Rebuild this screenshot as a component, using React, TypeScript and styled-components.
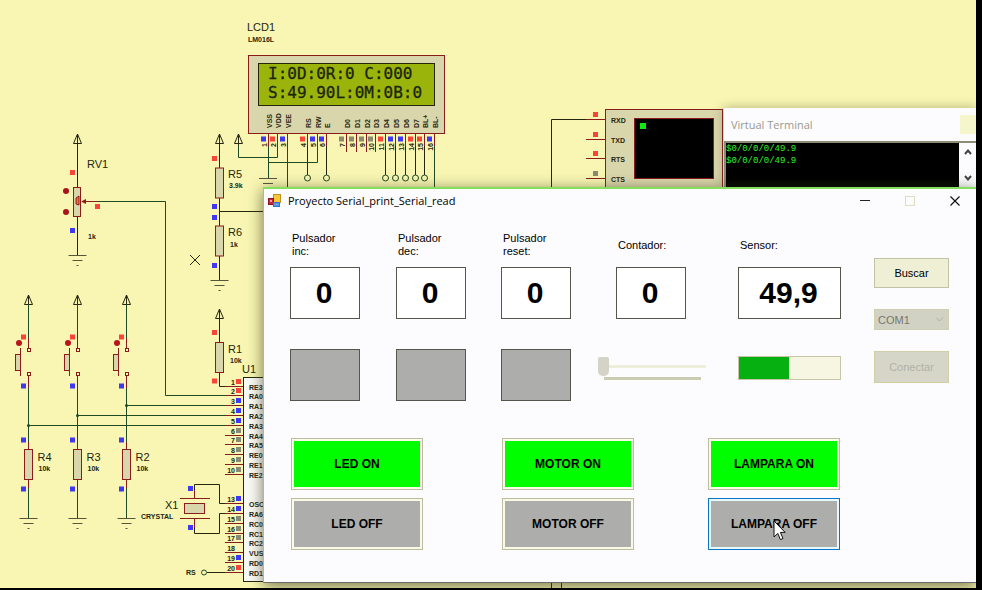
import React, { useState } from "react";
import styled, { createGlobalStyle, css } from "styled-components";

const GlobalStyle = createGlobalStyle`
  * { box-sizing: border-box; }
  body {
    margin: 0;
    background: #000;
    font-family: "Liberation Sans", Arial, sans-serif;
    font-size: 11px;
    color: #000;
  }
  button, input, select { font: inherit; color: inherit; margin: 0; }
`;

/* ---------- desktop ---------- */

const Desktop = styled.main`
  position: relative;
  min-height: 100vh;
  overflow: hidden;
  background: #f8f6b2;
  border-right: 6px solid #000;
  border-bottom: 2px solid #000;
`;

const Sheet = styled.svg`
  display: block;
  font-family: "Liberation Sans", Arial, sans-serif;
`;

const Frame = styled.section`
  position: absolute;
  right: 0;
  display: flex;
  flex-direction: column;
  background: #fcfcfe;
`;

const TerminalFrame = styled(Frame)`
  top: 108px;
  left: 724px;
  box-shadow: 0 0 10px rgba(70, 70, 40, 0.4);
`;

const FormFrame = styled(Frame)`
  top: 187px;
  left: 263px;
  border-top: 2px solid #84e05c;
  border-left: 1px solid #84d860;
  border-bottom: 1px solid #6a6a70;
  box-shadow: 0 3px 14px rgba(60, 60, 30, 0.7);
`;

/* ---------- terminal ---------- */

const TerminalTitle = styled.header`
  display: flex;
  align-items: center;
  justify-content: space-between;
  height: 33px;
  padding-left: 7px;
  font-family: "Open Sans", "Noto Sans", sans-serif;
  font-size: 11px;
  color: #99998c;
`;

const TitleGhost = styled.span`
  width: 16px;
  height: 19px;
  background: #f6f6cc;
`;

const TerminalBody = styled.div`
  display: flex;
  border-top: 2px solid #8c8c74;
  border-left: 2px solid #8c8c74;
`;

const TerminalText = styled.pre`
  flex: 1;
  height: 44px;
  margin: 0;
  background: #000;
  color: #2cf42c;
  font: 9px/12px "Liberation Mono", monospace;
`;

const ScrollBar = styled.div`
  display: flex;
  flex-direction: column;
  justify-content: space-between;
  width: 17px;
`;

const ScrollButton = styled.button`
  display: grid;
  place-items: center;
  height: 18px;
  padding: 0;
  border: 0;
  background: #fcfcfe;
`;

/* ---------- form ---------- */

const TitleBar = styled.header`
  display: flex;
  align-items: center;
  height: 24px;
  padding: 0 10px 0 4px;
  gap: 6px;
`;

const Title = styled.h1`
  flex: 1;
  margin: 0;
  font: 400 11px/24px "Open Sans", "Noto Sans", sans-serif;
  white-space: nowrap;
`;

const Controls = styled.div`
  display: flex;
  gap: 23px;
`;

const ControlButton = styled.button`
  display: grid;
  place-items: center;
  width: 22px;
  height: 22px;
  padding: 0;
  border: 0;
  background: none;
`;

const FormBody = styled.form`
  display: flex;
  gap: 33px;
  padding: 19px 27px 32px 26px;
`;

const Panel = styled.div`
  flex: 1;
  min-width: 0;
  display: flex;
  flex-direction: column;
`;

const Row = styled.div<{ $top?: number }>`
  display: grid;
  grid-template-columns: 106fr 105fr 115fr 122fr 103fr;
  margin-top: ${(p) => p.$top ?? 0}px;
`;

const Field = styled.div<{ $wide?: boolean }>`
  width: ${(p) => (p.$wide ? "103px" : "70px")};
`;

const FieldLabel = styled.label`
  display: flex;
  align-items: center;
  height: 26px;
  margin-bottom: 9px;
  padding: 0 2px;
  line-height: 13px;
`;

const Reading = styled.input`
  display: block;
  width: 100%;
  height: 52px;
  padding: 0 2px 0 0;
  border: 1px solid #55554c;
  background: #fff;
  text-align: center;
  && {
    font-size: 30px;
    font-weight: 700;
  }
`;

const Lamp = styled.div`
  width: 70px;
  height: 52px;
  border: 1px solid #55554c;
  background: #adaeac;
`;

const SliderBox = styled.div`
  width: 108px;
  margin-left: -18px;
  padding-top: 7px;
`;

const Slider = styled.input`
  appearance: none;
  display: block;
  width: 108px;
  height: 20px;
  background: none;
  &::-webkit-slider-runnable-track {
    height: 3px;
    background: #eeeeda;
  }
  &::-webkit-slider-thumb {
    appearance: none;
    width: 11px;
    height: 19px;
    margin-top: -8px;
    border-radius: 2px 2px 5px 5px;
    background: #d3d3c8;
  }
`;

const SliderTicks = styled.div`
  height: 3px;
  margin: 1px 5px 0 6px;
  background: #ccccb2;
`;

const Meter = styled.progress`
  appearance: none;
  display: block;
  width: 103px;
  height: 24px;
  margin-top: 7px;
  border: 1px solid #c6c6a6;
  &::-webkit-progress-bar {
    background: #f6f6e2;
  }
  &::-webkit-progress-value {
    background: #06b010;
  }
`;

const CommandGrid = styled.div`
  display: grid;
  grid-template-columns: 211fr 206fr 133fr;
  row-gap: 8px;
  margin-top: 37px;
  padding-left: 1px;
`;

const CommandCell = styled.div`
  position: relative;
  width: 132px;
`;

const Command = styled.button<{ $on?: boolean; $focused?: boolean }>`
  display: block;
  width: 100%;
  height: 52px;
  padding: 0;
  border: 1px solid #bcbca0;
  box-shadow: inset 0 0 0 2px #fafae6;
  background: ${(p) => (p.$on ? "#00fd00" : "#adaeac")};
  && {
    font-size: 12px;
    font-weight: 700;
  }
  ${(p) =>
    p.$focused &&
    css`
      border-color: #0a74c4;
      box-shadow: inset 0 0 0 2px #e8f8fc;
    `}
`;

const Pointer = styled.svg`
  position: absolute;
  left: 65px;
  top: 22px;
  pointer-events: none;
`;

const Side = styled.div`
  display: flex;
  flex-direction: column;
  width: 75px;
  padding-top: 26px;
`;

const SideButton = styled.button<{ $muted?: boolean }>`
  height: ${(p) => (p.$muted ? 32 : 30)}px;
  padding: 0;
  border: 1px solid ${(p) => (p.$muted ? "#cfcfa8" : "#c2c2a4")};
  background: ${(p) => (p.$muted ? "#d6d6c8" : "#efefd6")};
  &:disabled {
    color: #b2b2a2;
  }
`;

const PortBox = styled.div`
  position: relative;
  margin: 21px 0;
`;

const PortSelect = styled.select`
  appearance: none;
  display: block;
  width: 100%;
  height: 21px;
  padding: 0 3px;
  border: 1px solid #d0d0b0;
  border-radius: 0;
  background: #d2d2c4;
  opacity: 1;
  && {
    font-size: 11px;
    color: #77776c;
  }
`;

const PortArrow = styled.svg`
  position: absolute;
  right: 5px;
  top: 7px;
  pointer-events: none;
`;

/* ---------- schematic parts ---------- */

const WIRE = "#1f4a22";
const DARK = "#26260f";
const MAROON = "#8a1c1c";
const BODY = "#d9d6ab";
const RED = "#fa4438";
const BLUE = "#4038f4";
const GREY = "#8a8a70";

type XY = { x: number; y: number };

const Dot = ({ x, y, c }: XY & { c: string }) => (
  <rect x={x - 2.5} y={y - 2.5} width="5" height="5" fill={c} />
);

const Name = ({ x, y, children }: XY & { children: string }) => (
  <text x={x} y={y} fontSize="11" fill={DARK}>{children}</text>
);

const Tiny = ({ x, y, children, end }: XY & { children: string; end?: boolean }) => (
  <text x={x} y={y} fontSize="7" fontWeight="700" fill={DARK} textAnchor={end ? "end" : "start"}>
    {children}
  </text>
);

const Wire = ({ d, c = WIRE }: { d: string; c?: string }) => (
  <path d={d} fill="none" stroke={c} />
);

const Supply = ({ x, y }: XY) => (
  <path
    d={`M${x} ${y + 1}L${x - 4} ${y + 10.5}H${x + 4}ZV${y + 12}`}
    fill="none"
    stroke={DARK}
    strokeLinejoin="bevel"
  />
);

const Ground = ({ x, y }: XY) => (
  <path
    d={`M${x - 9} ${y}H${x + 9}M${x - 5} ${y + 5}H${x + 5}M${x - 1} ${y + 10}H${x + 1}`}
    stroke="#55553c"
    fill="none"
  />
);

const Resistor = ({ x, y }: XY) => (
  <rect x={x - 4} y={y} width="8" height="30" fill={BODY} stroke={MAROON} />
);

const Push = ({ x, name, bus }: { x: number; name: string; bus: number }) => (
  <g>
    <Supply x={x} y={294} />
    <Wire d={`M${x} 304V338M${x} 388V442M${x} 488V518`} />
    <Wire d={`M${x} 338V348M${x} 376V388M${x} 442V450M${x} 480V488M${x - 8} 348V376`} c={MAROON} />
    <rect x={x - 13} y={354.5} width="5" height="16" fill={BODY} stroke={MAROON} />
    <rect x={x - 1} y={348.5} width="3" height="3" fill="#f8f6b2" stroke={MAROON} />
    <rect x={x - 1} y={372.5} width="3" height="3" fill="#f8f6b2" stroke={MAROON} />
    <Dot x={x - 5} y={337} c={RED} />
    <circle cx={x - 9.5} cy={343} r="3" fill="#b8141c" />
    <Dot x={x - 5} y={386} c={BLUE} />
    <Wire d={`M${x} ${bus}H226`} />
    <circle cx={x} cy={bus} r="1.5" fill={WIRE} />
    <Dot x={x - 5} y={440} c={BLUE} />
    <Resistor x={x} y={449.5} />
    <Dot x={x - 5} y={489} c={BLUE} />
    <Ground x={x} y={518.5} />
    <Name x={x + 9} y={461}>{name}</Name>
    <Tiny x={x + 10} y={471}>10k</Tiny>
  </g>
);

const chipPins: [string, string, number, string | null][] = [
  ["1", "RE3", 386.5, RED],
  ["2", "RA0", 395.5, RED],
  ["3", "RA1", 405.5, BLUE],
  ["4", "RA2", 415.5, BLUE],
  ["5", "RA3", 425.5, BLUE],
  ["6", "RA4", 435.5, GREY],
  ["7", "RA5", 444.5, GREY],
  ["8", "RE0", 454.5, GREY],
  ["9", "RE1", 464.5, GREY],
  ["10", "RE2", 474.5, GREY],
  ["13", "OSC", 503.5, BLUE],
  ["14", "RA6", 513.5, BLUE],
  ["15", "RC0", 523.5, GREY],
  ["16", "RC1", 533.5, GREY],
  ["17", "RC2", 542.5, GREY],
  ["18", "VUS", 552.5, null],
  ["19", "RD0", 562.5, BLUE],
  ["20", "RD1", 572.5, RED],
];

const lcdPins: [string, string, number, string, "plain" | "stub" | "port"][] = [
  ["1", "VSS", 268.5, BLUE, "plain"],
  ["2", "VDD", 277.5, RED, "plain"],
  ["3", "VEE", 287.5, BLUE, "plain"],
  ["4", "RS", 307.5, RED, "port"],
  ["5", "RW", 317.5, BLUE, "plain"],
  ["6", "E", 326.5, BLUE, "port"],
  ["7", "D0", 346.5, GREY, "stub"],
  ["8", "D1", 356.5, GREY, "stub"],
  ["9", "D2", 366.5, GREY, "stub"],
  ["10", "D3", 375.5, GREY, "stub"],
  ["11", "D4", 385.5, RED, "port"],
  ["12", "D5", 395.5, BLUE, "port"],
  ["13", "D6", 405.5, BLUE, "port"],
  ["14", "D7", 415.5, RED, "port"],
  ["15", "BL+", 424.5, RED, "port"],
  ["16", "BL-", 434.5, BLUE, "plain"],
];

const serialPins: [string, number, string][] = [
  ["RXD", 119.5, RED],
  ["TXD", 139.5, RED],
  ["RTS", 158.5, RED],
  ["CTS", 178.5, GREY],
];

const Lcd = () => (
  <g>
    <text x="247" y="31" fontSize="11" fill={DARK}>LCD1</text>
    <Tiny x={248} y={42}>LM016L</Tiny>
    <rect x="248.5" y="55.5" width="196" height="78" fill={BODY} stroke={MAROON} />
    <rect x="258.5" y="63.5" width="176" height="42" fill="#9ab40c" stroke={DARK} />
    <g
      fontFamily="DejaVu Sans Mono, monospace"
      fontSize="16"
      fill="#1c240c"
      stroke="#1c240c"
      strokeWidth="0.3"
    >
      <text x="268" y="79">I:0D:0R:0 C:000</text>
      <text x="268" y="98">S:49.90L:0M:0B:0</text>
    </g>
    {lcdPins.map(([n, label, x, c, kind]) => (
      <g key={n}>
        <Wire d={`M${x} 134V152`} c={MAROON} />
        {kind === "port" && (
          <>
            <Wire d={`M${x} 146V175`} c={DARK} />
            <circle cx={x} cy="178" r="3" fill="none" stroke={WIRE} />
          </>
        )}
        <Dot x={x - 5} y={139} c={c} />
        <g fontSize="7" fontWeight="700" fill={DARK}>
          <text transform={`translate(${x - 2} 143) rotate(-90)`} textAnchor="end">{n}</text>
          <text transform={`translate(${x + 3} 128) rotate(-90)`}>{label}</text>
        </g>
      </g>
    ))}
    <Wire d="M268.5 146V178M277.5 146V157.5H238.5V144M268.5 162.5H317.5V146M287.5 146V188M434.5 146V188" />
    <Ground x={268} y={178.5} />
  </g>
);

const Schematic = () => (
  <Sheet width="976" height="588" role="img" aria-label="Circuit schematic">
    <Lcd />

    {/* potentiometer */}
    <Supply x={77.5} y={133} />
    <Wire d="M77.5 144V188M77.5 217V255" c={DARK} />
    <Ground x={77.5} y={255.5} />
    <rect x="73.5" y="187.5" width="7" height="29" fill={BODY} stroke={MAROON} />
    <path d="M76 204V198L79 196V205Z" fill="#f07038" stroke={MAROON} />
    <Wire d="M98 201.5H165.5V395.5H226" />
    <Wire d="M84 201.5H98" c={MAROON} />
    <path d="M81 201.5L86 199V204Z" fill={MAROON} />
    <Dot x={72.5} y={172.5} c={RED} />
    <Dot x={72.5} y={230.5} c={BLUE} />
    <Dot x={97.5} y={206.5} c={RED} />
    <circle cx="66" cy="191" r="3" fill="#a8141c" />
    <circle cx="66" cy="212" r="3" fill="#a8141c" />
    <Name x={87} y={168}>RV1</Name>
    <Tiny x={88} y={239}>1k</Tiny>

    {/* divider */}
    <Supply x={219.5} y={133} />
    <Supply x={238.5} y={133} />
    <Wire d="M219.5 144V168M219.5 198V226M219.5 256V280M219.5 211.5H264" c={DARK} />
    <Resistor x={219.5} y={168} />
    <Resistor x={219.5} y={226} />
    <Ground x={219.5} y={280.5} />
    <Dot x={214.5} y={158.5} c={RED} />
    <Dot x={214.5} y={206.5} c={BLUE} />
    <Dot x={214.5} y={217.5} c={BLUE} />
    <Dot x={214.5} y={265.5} c={BLUE} />
    <Name x={228} y={178}>R5</Name>
    <Tiny x={229} y={188}>3.9k</Tiny>
    <Name x={228} y={236}>R6</Name>
    <Tiny x={230} y={247}>1k</Tiny>
    <path d="M190 255L200 265M200 255L190 265" stroke={DARK} />

    {/* reset pull-up */}
    <Supply x={219.5} y={308} />
    <Wire d="M219.5 319V343M219.5 373V386.5H243" c={DARK} />
    <Resistor x={219.5} y={342.5} />
    <Dot x={214.5} y={332.5} c={RED} />
    <Dot x={214.5} y={381} c={RED} />
    <Name x={228} y={353}>R1</Name>
    <Tiny x={230} y={363}>10k</Tiny>

    <Push x={28.5} name="R4" bus={425.5} />
    <Push x={77.5} name="R3" bus={415.5} />
    <Push x={126.5} name="R2" bus={405.5} />

    {/* crystal */}
    <Wire d="M194.5 490V484.5H219.5V503.5H226M194.5 528V533.5H219.5V513.5H226" c={DARK} />
    <Wire d="M194.5 490V498.5M194.5 518.5V528M180 498.5H210M180 518.5H210" c={MAROON} />
    <rect x="184.5" y="503.5" width="20" height="10" fill={BODY} stroke={MAROON} />
    <Dot x={190.5} y={488.5} c={BLUE} />
    <Dot x={190.5} y={527.5} c={BLUE} />
    <Name x={165} y={509}>X1</Name>
    <Tiny x={141} y={519}>CRYSTAL</Tiny>
    <Tiny x={186} y={575}>RS</Tiny>
    <circle cx="204" cy="572.5" r="2.5" fill="none" stroke={WIRE} />
    <Wire d="M207 572.5H226" c={DARK} />

    {/* controller */}
    <Name x={242} y={373}>U1</Name>
    <rect x="243.5" y="377.5" width="60" height="204" fill="#fafaf6" stroke={DARK} />
    {chipPins.map(([n, label, y, c]) => (
      <g key={n}>
        <Wire d={`M225 ${y}H243`} c={MAROON} />
        <Tiny x={235} y={y - 2} end>{n}</Tiny>
        {c && <Dot x={238.5} y={y - 5} c={c} />}
        <Tiny x={249} y={y + 3}>{label}</Tiny>
      </g>
    ))}

    {/* serial terminal component */}
    <Wire d="M551.5 188V119.5H590" c={DARK} />
    <rect x="605.5" y="109.5" width="117" height="90" fill={BODY} stroke={MAROON} />
    <rect x="634.5" y="118.5" width="79" height="60" fill="#000" stroke={MAROON} />
    <rect x="640" y="123" width="6" height="6" fill="#10e810" />
    {serialPins.map(([label, y, c]) => (
      <g key={label}>
        <Wire d={`M586 ${y}H605`} c={MAROON} />
        <Dot x={595.5} y={y - 5} c={c} />
        <Tiny x={611} y={y + 3}>{label}</Tiny>
      </g>
    ))}
    <Wire d="M551.5 580V588M561.5 580V588" c={DARK} />
  </Sheet>
);

/* ---------- windows ---------- */

const VirtualTerminal = () => (
  <TerminalFrame aria-label="Virtual Terminal">
    <TerminalTitle>
      Virtual Terminal
      <TitleGhost />
    </TerminalTitle>
    <TerminalBody>
      <TerminalText>{"$0/0/0/0/49.9\n$0/0/0/0/49.9"}</TerminalText>
      <ScrollBar>
        <ScrollButton aria-label="Scroll up">
          <svg width="8" height="6"><path d="M1 5L4 1.5L7 5" fill="none" stroke="#444" strokeWidth="2" /></svg>
        </ScrollButton>
        <ScrollButton aria-label="Scroll down">
          <svg width="8" height="6"><path d="M1 1L4 4.5L7 1" fill="none" stroke="#444" strokeWidth="2" /></svg>
        </ScrollButton>
      </ScrollBar>
    </TerminalBody>
  </TerminalFrame>
);

const AppIcon = () => (
  <svg width="14" height="14" viewBox="0 0 14 14" aria-hidden="true">
    <rect x="5.5" y="0.5" width="7" height="8" fill="#f4c838" stroke="#c09020" />
    <rect x="0.5" y="4.5" width="5" height="6" fill="#c8242c" stroke="#8c1420" />
    <rect x="2" y="6" width="2" height="2" fill="#f4a0a0" />
    <rect x="5.5" y="8.5" width="6" height="4" fill="#5a9ce8" stroke="#3a70c0" />
  </svg>
);

const readings = [
  { id: "inc", label: ["Pulsador", "inc:"], value: "0" },
  { id: "dec", label: ["Pulsador", "dec:"], value: "0" },
  { id: "reset", label: ["Pulsador", "reset:"], value: "0" },
  { id: "contador", label: ["Contador:"], value: "0" },
  { id: "sensor", label: ["Sensor:"], value: "49,9", wide: true },
];

const commands = ["LED ON", "MOTOR ON", "LAMPARA ON", "LED OFF", "MOTOR OFF", "LAMPARA OFF"];

const SerialForm = () => {
  const [level, setLevel] = useState(0);
  return (
    <FormFrame aria-label="Proyecto Serial_print_Serial_read">
      <TitleBar>
        <AppIcon />
        <Title>Proyecto Serial_print_Serial_read</Title>
        <Controls>
          <ControlButton aria-label="Minimize">
            <svg width="10" height="10"><path d="M0 4.5H10" stroke="#222" strokeWidth="1" /></svg>
          </ControlButton>
          <ControlButton aria-label="Maximize" disabled>
            <svg width="10" height="10"><rect x="0.5" y="0.5" width="9" height="9" fill="none" stroke="#dedebc" /></svg>
          </ControlButton>
          <ControlButton aria-label="Close">
            <svg width="10" height="10"><path d="M0.5 0.5L9.5 9.5M9.5 0.5L0.5 9.5" stroke="#111" strokeWidth="1.2" /></svg>
          </ControlButton>
        </Controls>
      </TitleBar>
      <FormBody onSubmit={(e) => e.preventDefault()}>
        <Panel>
          <Row>
            {readings.map((r) => (
              <Field key={r.id} $wide={r.wide}>
                <FieldLabel htmlFor={r.id}>
                  <span>
                    {r.label[0]}
                    {r.label[1] && <br />}
                    {r.label[1]}
                  </span>
                </FieldLabel>
                <Reading id={r.id} value={r.value} readOnly />
              </Field>
            ))}
          </Row>
          <Row $top={30}>
            <Lamp />
            <Lamp />
            <Lamp />
            <SliderBox>
              <Slider
                type="range"
                aria-label="Contador"
                min={0}
                max={10}
                value={level}
                onChange={(e) => setLevel(Number(e.target.value))}
              />
              <SliderTicks />
            </SliderBox>
            <Meter aria-label="Sensor" max={100} value={49.9} />
          </Row>
          <CommandGrid>
            {commands.map((name) => {
              const active = name === "LAMPARA OFF";
              return (
                <CommandCell key={name}>
                  <Command type="button" $on={name.endsWith("ON")} $focused={active}>
                    {name}
                  </Command>
                  {active && (
                    <Pointer width="13" height="21" viewBox="0 0 13 21" aria-hidden="true">
                      <path
                        d="M1 1V17L4.8 13.4L7.4 19.6L10 18.5L7.4 12.4H12.2Z"
                        fill="#fff"
                        stroke="#111"
                      />
                    </Pointer>
                  )}
                </CommandCell>
              );
            })}
          </CommandGrid>
        </Panel>
        <Side>
          <SideButton type="button">Buscar</SideButton>
          <PortBox>
            <PortSelect aria-label="Puerto" disabled defaultValue="COM1">
              <option>COM1</option>
            </PortSelect>
            <PortArrow width="9" height="7">
              <path d="M1 1.5L4.5 5L8 1.5" fill="none" stroke="#b0b0a0" />
            </PortArrow>
          </PortBox>
          <SideButton type="button" $muted disabled>
            Conectar
          </SideButton>
        </Side>
      </FormBody>
    </FormFrame>
  );
};

export default function App() {
  return (
    <>
      <GlobalStyle />
      <Desktop>
        <Schematic />
        <VirtualTerminal />
        <SerialForm />
      </Desktop>
    </>
  );
}
